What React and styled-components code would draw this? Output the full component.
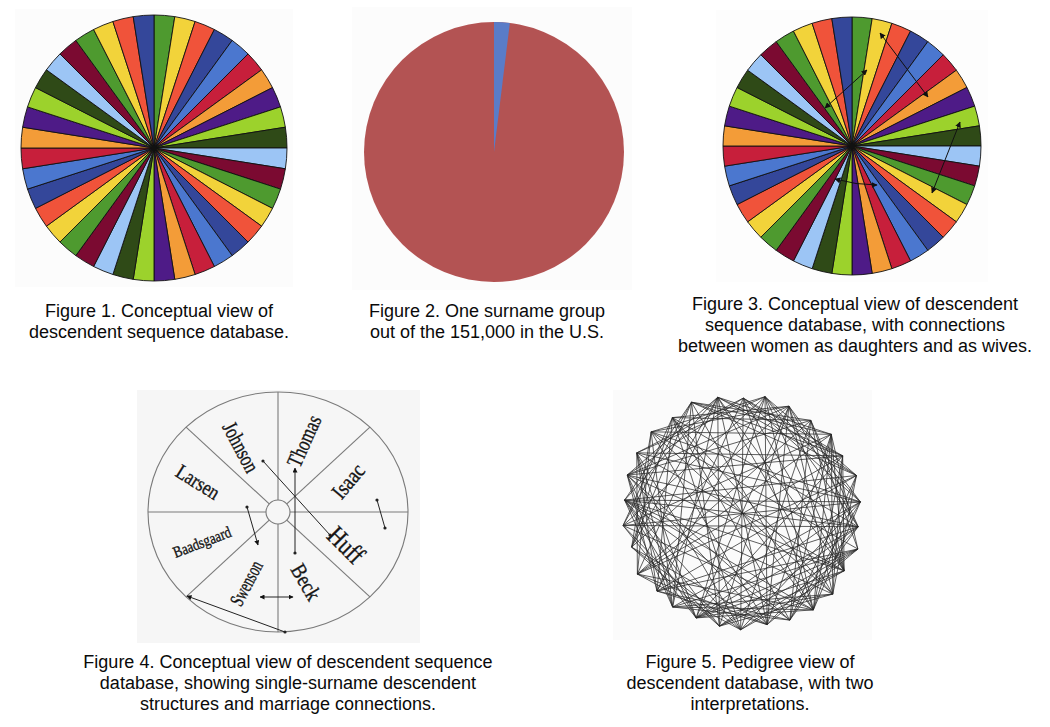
import React from "react";
import styled, { createGlobalStyle } from "styled-components";

const Global = createGlobalStyle`
  html, body { margin: 0; padding: 0; background: #ffffff; }
  body { font-family: "Liberation Sans", Arial, sans-serif; color: #0a0a0a; }
`;

const Page = styled.div`
  width: 1050px;
  height: 727px;
  overflow: hidden;
  display: flex;
  flex-direction: column;
  background: #ffffff;
`;

const Row = styled.div`
  display: flex;
  align-items: flex-start;
  margin-top: ${(p) => p.$top || 0}px;
`;

const Figure = styled.figure`
  margin: 0;
  margin-left: ${(p) => p.$left}px;
  margin-top: ${(p) => p.$top || 0}px;
  width: ${(p) => p.$width}px;
  display: flex;
  flex-direction: column;
  align-items: center;
  flex: none;
`;

const Plate = styled.div`
  width: ${(p) => p.$w}px;
  height: ${(p) => p.$h}px;
  background: ${(p) => p.$bg};
  margin-left: ${(p) => p.$ml || 0}px;
  margin-right: ${(p) => p.$mr || 0}px;
  flex: none;
  svg { display: block; }
`;

const Caption = styled.figcaption`
  margin-top: ${(p) => p.$gap}px;
  font-family: "Liberation Sans", Arial, sans-serif;
  font-size: 18px;
  line-height: 21px;
  text-align: center;
  white-space: nowrap;
  color: #0a0a0a;
`;

const WHEEL = [
  "#4e9a2f", "#f2d33a", "#f0533a", "#34479a", "#4b77cf", "#c71f3b",
  "#f39c38", "#4e1b87", "#9cd22c", "#2f4a17", "#9cc5f5", "#7b0a31",
];

function pt(cx, cy, r, deg) {
  const a = (deg * Math.PI) / 180;
  return [cx + r * Math.sin(a), cy - r * Math.cos(a)];
}

function slicePath(cx, cy, r, a0, a1) {
  const [x0, y0] = pt(cx, cy, r, a0);
  const [x1, y1] = pt(cx, cy, r, a1);
  const large = a1 - a0 > 180 ? 1 : 0;
  return `M${cx},${cy} L${x0.toFixed(2)},${y0.toFixed(2)} A${r},${r} 0 ${large} 1 ${x1.toFixed(2)},${y1.toFixed(2)} Z`;
}

function Wheel({ cx, cy, r }) {
  const n = 40;
  return (
    <g>
      {Array.from({ length: n }, (_, i) => (
        <path
          key={i}
          d={slicePath(cx, cy, r, i * 9, (i + 1) * 9)}
          fill={WHEEL[i % 12]}
          stroke="#111"
          strokeWidth="0.9"
          strokeLinejoin="round"
        />
      ))}
      <circle cx={cx} cy={cy} r="3" fill="#111" />
    </g>
  );
}

function Fig1() {
  return (
    <svg width="278" height="278" viewBox="0 0 278 278">
      <Wheel cx={139} cy={139} r={133} />
    </svg>
  );
}

function Fig2() {
  const cx = 142, cy = 145, r = 130;
  return (
    <svg width="280" height="283" viewBox="0 0 280 283">
      <circle cx={cx} cy={cy} r={r} fill="#b35353" />
      <path d={slicePath(cx, cy, r, 0, 7)} fill="#5a7cc8" />
    </svg>
  );
}

function ArrowDefs({ id, size = 5 }) {
  return (
    <defs>
      <marker id={`${id}-end`} viewBox="0 0 10 10" refX="9" refY="5" markerWidth={size} markerHeight={size} orient="auto">
        <path d="M0,0 L10,5 L0,10 z" fill="#111" />
      </marker>
      <marker id={`${id}-start`} viewBox="0 0 10 10" refX="1" refY="5" markerWidth={size} markerHeight={size} orient="auto">
        <path d="M10,0 L0,5 L10,10 z" fill="#111" />
      </marker>
    </defs>
  );
}

function Fig3() {
  const arrows = [
    "M164,23 L212,87",
    "M151,60 L109,98",
    "M244,112 L216,183",
    "M119,169 Q140,175 161,175",
  ];
  return (
    <svg width="272" height="272" viewBox="0 0 272 272">
      <ArrowDefs id="f3" size={6} />
      <Wheel cx={136} cy={136} r={129} />
      {arrows.map((d, i) => (
        <path key={i} d={d} fill="none" stroke="#111" strokeWidth="1" markerStart="url(#f3-start)" markerEnd="url(#f3-end)" />
      ))}
    </svg>
  );
}

const NAMES = [
  { t: "Johnson", x: 104, y: 57, a: 62, s: 22, l: 54 },
  { t: "Thomas", x: 167, y: 51, a: -66, s: 22, l: 54 },
  { t: "Isaac", x: 211, y: 91, a: -50, s: 22, l: 38 },
  { t: "Larsen", x: 61, y: 92, a: 32, s: 21, l: 47 },
  { t: "Baadsgaard", x: 65, y: 152, a: -21, s: 16, l: 61 },
  { t: "Huff", x: 209, y: 155, a: 45, s: 27, l: 40 },
  { t: "Swenson", x: 109, y: 193, a: -62, s: 20, l: 48 },
  { t: "Beck", x: 169, y: 192, a: 60, s: 22, l: 38 },
];

function Fig4() {
  const cx = 141, cy = 122, rx = 130, ry = 120;
  const c = Math.SQRT1_2;
  const spokes = [
    [cx - rx, cy, cx + rx, cy],
    [cx, cy - ry, cx, cy + ry],
    [cx - rx * c, cy - ry * c, cx + rx * c, cy + ry * c],
    [cx + rx * c, cy - ry * c, cx - rx * c, cy + ry * c],
  ];
  const links = [
    { d: "M126,71 L193,145", s: false, e: false },
    { d: "M158,163 L158,78", s: false, e: true },
    { d: "M240,110 L248,138", s: false, e: false },
    { d: "M110,117 L121,155", s: false, e: true },
    { d: "M123,207 L156,207", s: true, e: true },
    { d: "M50,206 L148,242", s: true, e: false },
  ];
  const dots = [
    [126, 71], [193, 145], [158, 163], [240, 110], [248, 138], [110, 117], [148, 242],
  ];
  return (
    <svg width="283" height="253" viewBox="0 0 283 253">
      <ArrowDefs id="f4" size={5} />
      <ellipse cx={cx} cy={cy} rx={rx} ry={ry} fill="none" stroke="#7a7a7a" strokeWidth="1.1" />
      {spokes.map((l, i) => (
        <line key={i} x1={l[0]} y1={l[1]} x2={l[2]} y2={l[3]} stroke="#7a7a7a" strokeWidth="1.1" />
      ))}
      <circle cx={cx} cy={cy} r="12" fill="#f6f6f6" stroke="#7a7a7a" strokeWidth="1.1" />
      {links.map((l, i) => (
        <path
          key={i}
          d={l.d}
          stroke="#222"
          strokeWidth="1"
          fill="none"
          markerStart={l.s ? "url(#f4-start)" : undefined}
          markerEnd={l.e ? "url(#f4-end)" : undefined}
        />
      ))}
      {dots.map((d, i) => (
        <circle key={i} cx={d[0]} cy={d[1]} r="1.6" fill="#222" />
      ))}
      {NAMES.map((n) => (
        <text
          key={n.t}
          x={n.x}
          y={n.y}
          fontFamily='"Liberation Serif", "Times New Roman", serif'
          fontSize={n.s}
          fill="#151515"
          stroke="#151515"
          strokeWidth="0.35"
          textAnchor="middle"
          dominantBaseline="central"
          textLength={n.l}
          lengthAdjust="spacingAndGlyphs"
          transform={`rotate(${n.a} ${n.x} ${n.y})`}
        >
          {n.t}
        </text>
      ))}
    </svg>
  );
}

function mulberry32(seed) {
  let a = seed;
  return function () {
    a |= 0;
    a = (a + 0x6d2b79f5) | 0;
    let t = Math.imul(a ^ (a >>> 15), 1 | a);
    t = (t + Math.imul(t ^ (t >>> 7), 61 | t)) ^ t;
    return ((t ^ (t >>> 14)) >>> 0) / 4294967296;
  };
}

function buildGraph() {
  const rnd = mulberry32(20240611);
  const N = 30;
  const cx = 129, cy = 123;
  const verts = Array.from({ length: N }, (_, i) => {
    const ang = (i / N) * Math.PI * 2 + 0.03 * (rnd() - 0.5) - Math.PI / 2;
    const r = 114 + rnd() * 8;
    return [cx + r * Math.cos(ang), cy + r * Math.sin(ang)];
  });
  const edges = [];
  const seen = new Set();
  const add = (a, b) => {
    const i = ((a % N) + N) % N;
    const j = ((b % N) + N) % N;
    if (i === j) return;
    const key = i < j ? `${i}-${j}` : `${j}-${i}`;
    if (seen.has(key)) return;
    seen.add(key);
    edges.push([verts[i], verts[j]]);
  };
  for (let i = 0; i < N; i++) {
    add(i, i + 5);
    add(i, i + 6);
    for (let k = 0; k < 4; k++) {
      add(i, i + 7 + Math.floor(rnd() * 9));
    }
  }
  return edges;
}

const GRAPH = buildGraph();

function Fig5() {
  return (
    <svg width="259" height="250" viewBox="0 0 259 250">
      {GRAPH.map((e, i) => (
        <line
          key={i}
          x1={e[0][0].toFixed(2)}
          y1={e[0][1].toFixed(2)}
          x2={e[1][0].toFixed(2)}
          y2={e[1][1].toFixed(2)}
          stroke="#2a2a2a"
          strokeWidth="0.75"
        />
      ))}
    </svg>
  );
}

export default function App() {
  return (
    <Page>
      <Global />
      <Row>
        <Figure $left={9} $top={9} $width={300}>
          <Plate $w={278} $h={278} $bg="#fcfcfc" $mr={10}>
            <Fig1 />
          </Plate>
          <Caption $gap={14}>
            Figure 1. Conceptual view of
            <br />
            descendent sequence database.
          </Caption>
        </Figure>
        <Figure $left={28} $top={7} $width={300}>
          <Plate $w={280} $h={283} $bg="#fcfcfc" $ml={10}>
            <Fig2 />
          </Plate>
          <Caption $gap={11}>
            Figure 2. One surname group
            <br />
            out of the 151,000 in the U.S.
          </Caption>
        </Figure>
        <Figure $left={28} $top={10} $width={380}>
          <Plate $w={272} $h={272} $bg="#fdfdfd" $mr={6}>
            <Fig3 />
          </Plate>
          <Caption $gap={12}>
            Figure 3. Conceptual view of descendent
            <br />
            sequence database, with connections
            <br />
            between women as daughters and as wives.
          </Caption>
        </Figure>
      </Row>
      <Row $top={33}>
        <Figure $left={68} $width={440}>
          <Plate $w={283} $h={253} $bg="#f6f6f6" $mr={19}>
            <Fig4 />
          </Plate>
          <Caption $gap={9}>
            Figure 4. Conceptual view of descendent sequence
            <br />
            database, showing single-surname descendent
            <br />
            structures and marriage connections.
          </Caption>
        </Figure>
        <Figure $left={92} $width={300}>
          <Plate $w={259} $h={250} $bg="#fbfbfb" $mr={15}>
            <Fig5 />
          </Plate>
          <Caption $gap={12}>
            Figure 5. Pedigree view of
            <br />
            descendent database, with two
            <br />
            interpretations.
          </Caption>
        </Figure>
      </Row>
    </Page>
  );
}
